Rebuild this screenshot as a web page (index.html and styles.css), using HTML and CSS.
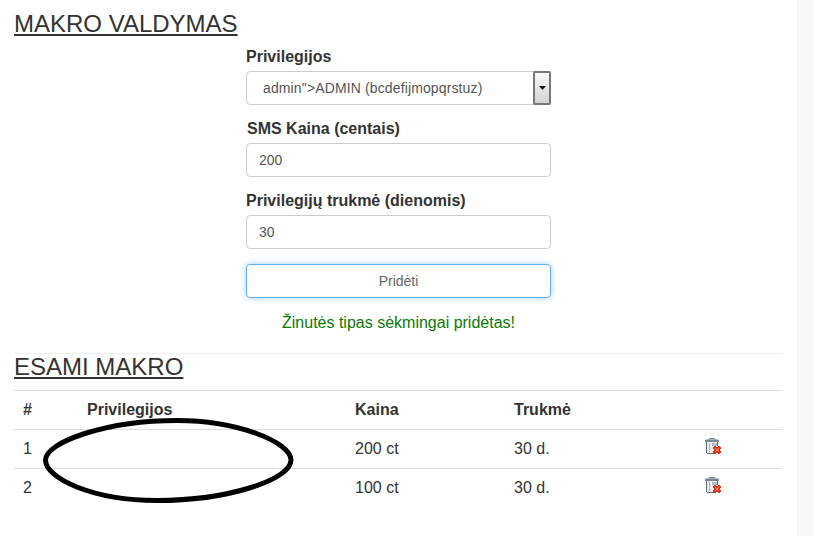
FILE: index.html
```html
<!DOCTYPE html>
<html lang="lt">
<head>
<meta charset="utf-8">
<title>Makro valdymas</title>
<link rel="stylesheet" href="styles.css">
</head>
<body>
<svg class="defs" width="0" height="0">
  <symbol id="trash" viewBox="0 0 16 16">
    <g shape-rendering="crispEdges">
      <path d="M4 0h6v1H4z" fill="#79828c"/>
      <path d="M1 1h12v1H1z" fill="#aab2ba"/>
      <path d="M0 2h14v2H0z" fill="#7d8690"/>
      <path d="M2 4h10v11H2z" fill="#e9edf0"/>
      <path d="M1 4h1v11H1zM12 4h1v4h-1zM2 15h7v1H2z" fill="#5f6873"/>
      <path d="M4 5h1v9H4zM7 5h1v3H7z" fill="#aab2ba"/>
      <path d="M8 5h4v3H8z" fill="#b7bec5"/>
      <path d="M9 8h2v1h2V8h2v1h1v2h-1v2h1v2h-1v1h-2v-1h-2v1H9v-1H8v-2h1v-2H8V9h1z" fill="#e8300a"/>
      <path d="M10 10h1v1h2v-1h1v1h-1v2h1v1h-1v-1h-2v1h-1v-1h1v-2h-1z" fill="#ff8f73"/>
    </g>
  </symbol>
</svg>
<div class="page">
  <main class="content">
    <h2 class="title title-first">MAKRO VALDYMAS</h2>
    <form class="form">
      <label class="label">Privilegijos</label>
      <div class="select">
        <span class="select-text">admin"&gt;ADMIN (bcdefijmopqrstuz)</span>
        <span class="select-arrow"><svg width="7" height="4" viewBox="0 0 7 4"><path d="M0 0h7L3.500 4z" fill="#111"/></svg></span>
      </div>
      <label class="label label-sms">SMS Kaina (centais)</label>
      <div class="input">200</div>
      <label class="label">Privilegijų trukmė (dienomis)</label>
      <div class="input">30</div>
      <button type="button" class="button">Pridėti</button>
      <p class="success">Žinutės tipas sėkmingai pridėtas!</p>
    </form>
    <hr class="rule">
    <h2 class="title">ESAMI MAKRO</h2>
    <div class="table-wrap">
      <table class="table">
        <thead>
          <tr><th class="c1">#</th><th class="c2">Privilegijos</th><th class="c3">Kaina</th><th class="c4">Trukmė</th><th class="c5"></th></tr>
        </thead>
        <tbody>
          <tr><td>1</td><td></td><td>200 ct</td><td>30 d.</td><td><svg class="trash" width="16" height="16"><use href="#trash"/></svg></td></tr>
          <tr><td>2</td><td></td><td>100 ct</td><td>30 d.</td><td><svg class="trash" width="16" height="16"><use href="#trash"/></svg></td></tr>
        </tbody>
      </table>
      <svg class="scribble" width="252" height="88" viewBox="0 0 252 88"><path d="M3.500 44C3.500 26 65 4.500 135 4.500C195 4.500 249 26 249 44C249 64 185 84.500 115 84.500C50 84.500 3.500 62 3.500 44Z" fill="none" stroke="#000" stroke-width="5"/></svg>
    </div>
  </main>
  <aside class="side"></aside>
</div>
</body>
</html>
```
FILE: styles.css
```css
* { box-sizing: border-box; }
html, body { margin: 0; height: 100%; }
body { font-family: "Liberation Sans", Arial, sans-serif; font-size: 16px; color: #333; background: #fff; overflow: hidden; }
.defs { display: block; height: 0; }
.page { display: flex; width: 814px; height: 536px; }
.content { width: 783px; padding: 0 0 0 14px; flex: none; }
.side { width: 17px; margin-left: 14px; flex: none; background: #f8f8f8; border-left: 1px solid #fbf3e8; }
.title { margin: 0; font-size: 24px; line-height: 26px; font-weight: 400; text-decoration: underline; text-decoration-thickness: 2px; text-underline-offset: 2px; }
.title-first { padding-top: 11px; }
.form { display: flex; flex-direction: column; width: 305px; margin: 9px 0 0 232px; }
.label { display: block; font-size: 16px; font-weight: 700; line-height: 22px; margin-bottom: 3px; }
.label-sms { padding-left: 1px; }
.select, .input { height: 34px; border: 1px solid #ccc; border-radius: 4px; font-size: 14px; color: #555; background: #fff; margin-bottom: 13px; }
.select { display: flex; align-items: center; justify-content: space-between; padding-left: 16px; }
.select-text { letter-spacing: .13px; }
.select-arrow { display: flex; align-items: center; justify-content: center; width: 18px; height: 34px; margin-right: -1px; border: 2px solid #777; border-radius: 2px; background: linear-gradient(#fafafa, #d2d2d2); }
.input { line-height: 32px; padding-left: 12px; }
.button { height: 34px; padding: 0; margin-top: 2px; font: 14px "Liberation Sans", Arial, sans-serif; color: #666; background: #fff; border: 1px solid #66afe9; border-radius: 4px; box-shadow: 0 0 6px rgba(102, 175, 233, .6); }
.success { margin: 15px 0 0; font-size: 16px; line-height: 20px; color: #087a08; text-align: center; }
.rule { width: 768px; margin: 20px 0 0; border: 0; border-top: 1px solid #eee; }
.table-wrap { position: relative; width: 768px; margin-top: 10px; }
.table { width: 100%; border-collapse: collapse; table-layout: fixed; font-size: 16px; }
.table th { height: 39px; text-align: left; font-weight: 700; padding: 0 0 0 9px; border-top: 1px solid #ddd; }
.table td { height: 39px; padding: 0 0 0 9px; border-top: 1px solid #ddd; }
.c1 { width: 64px; }
.c2 { width: 268px; }
.c3 { width: 159px; }
.c4 { width: 191px; }
.trash { display: block; margin: -6px 0 0 0; }
.scribble { position: absolute; left: 28px; top: 26px; }
```
